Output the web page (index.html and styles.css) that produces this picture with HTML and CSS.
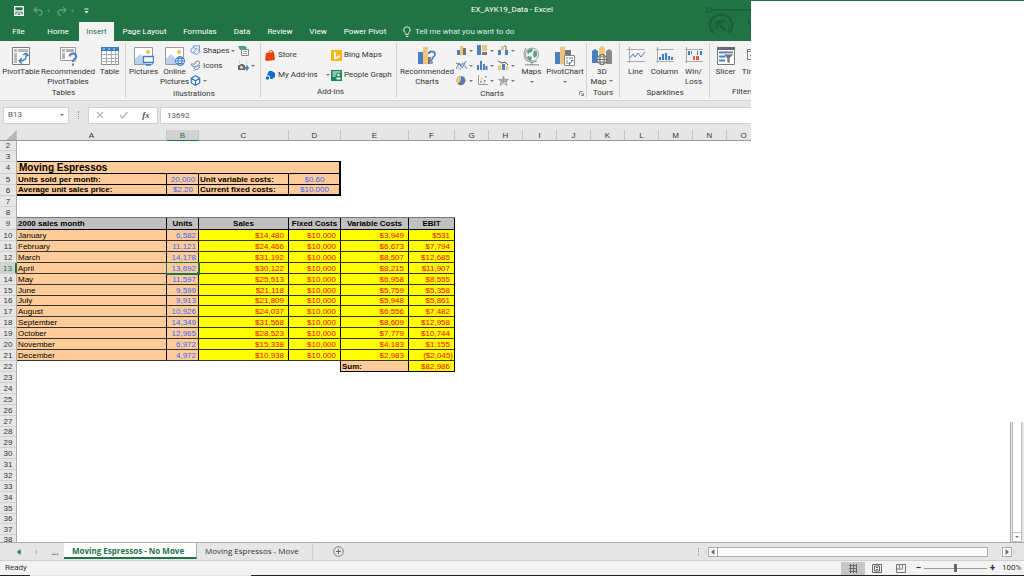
FILE: index.html
```html
<!DOCTYPE html>
<html lang="en">
<head>
<meta charset="utf-8">
<title>EX_AYK19_Data - Excel</title>
<link rel="stylesheet" href="styles.css">
</head>
<body>
<div class="app">
  <header class="title-bar">
    <div class="quick">
      <button class="flat" aria-label="Save"><svg width="10" height="10" viewBox="0 0 10 10"><path d="M.7.7h8.6v8.6H.7z" fill="none" stroke="#fff" stroke-width="1.3"/><path d="M.7 5h8.6" stroke="#fff" stroke-width="1.4"/><path d="M3 9V7h4v2" fill="none" stroke="#fff" stroke-width="1.2"/></svg></button>
      <button class="flat undo" aria-label="Undo"><svg width="18" height="10" viewBox="0 0 18 10"><path d="M4 1 1 4l3 3M1 4h5q3 0 3 3 0 2-3 2.500" fill="none" stroke="#5f9c79" stroke-width="1.300"/><path d="M14 4h3l-1.500 2z" fill="#5f9c79"/></svg></button>
      <button class="flat redo" aria-label="Redo"><svg width="18" height="10" viewBox="0 0 18 10"><path d="M6 1l3 3-3 3M9 4H4Q1 4 1 7q0 2 3 2.500" fill="none" stroke="#5f9c79" stroke-width="1.300"/><path d="M14 4h3l-1.500 2z" fill="#5f9c79"/></svg></button>
      <button class="flat" aria-label="Customize"><svg width="5" height="6" viewBox="0 0 5 6"><path d="M.5 1h4" stroke="#fff"/><path d="M.5 3h4l-2 2.500z" fill="#fff"/></svg></button>
    </div>
    <h1 class="doc-title">EX_AYK19_Data - Excel</h1>
    <svg class="title-art" width="60" height="33" viewBox="0 0 60 33"><g fill="none" stroke="#1a6038"><path d="M9 10h51" stroke-width="2"/><circle cx="6" cy="10" r="2.200" stroke-width="1.500"/><path d="M10 33a11 11 0 1 1 16 0" stroke-width="2.500"/><path d="M12 33a8 8 0 1 1 13-1" stroke-width="1"/><path d="M14 29v-7h7M14.500 22.500l8 8" stroke-width="2.500"/><circle cx="48" cy="22" r="2.500" stroke-width="1.500"/></g></svg>
  </header>

  <nav class="tabs">
    <button class="tab file">File</button>
    <button class="tab home">Home</button>
    <button class="tab active">Insert</button>
    <button class="tab layout">Page Layout</button>
    <button class="tab formulas">Formulas</button>
    <button class="tab data">Data</button>
    <button class="tab review">Review</button>
    <button class="tab view">View</button>
    <button class="tab pivot">Power Pivot</button>
    <button class="tab tell"><svg width="8" height="12" viewBox="0 0 8 12"><path d="M2.700 8.500V7.200Q.8 6 .8 4a3.200 3.200 0 0 1 6.400 0q0 2-1.900 3.200v1.300zM2.700 10.500h2.600" fill="none" stroke="#e6f0ea" stroke-width="1"/></svg>Tell me what you want to do</button>
  </nav>

  <section class="ribbon">
    <div class="group g-tables">
      <div class="tools">
        <button class="big w38"><svg width="20" height="20" viewBox="0 0 20 20"><path d="M1.500 1.500h17v17h-17z" fill="#fff" stroke="#7b7b7b"/><path d="M3 3h3v3H3zM7 3h10v3H7zM3 7h3v10H3z" fill="#b9b9b9"/><path d="M9 15c5 0 7-3 6-7M8 15l3-3M8 15l3 2.500M15 7l-3 2M15 7l2.500 3" fill="none" stroke="#3c7ec2" stroke-width="1.500"/></svg><span>PivotTable</span></button>
        <button class="big w56"><svg width="20" height="20" viewBox="0 0 20 20"><path d="M2.500 1.500h15v13h-15z" fill="#fff" stroke="#999"/><path d="M4 3h3v3H4zM8 3h8v3H8zM4 7h3v6H4z" fill="#b0b0b0"/><path d="M11.500 10.500q.5-3 3.500-3t3.200 3q0 1.500-1.700 2.500-1.500 1-1.500 3M15 17.500v2" fill="none" stroke="#4180c0" stroke-width="2"/></svg><span>Recommended<br>PivotTables</span></button>
        <button class="big w27"><svg width="20" height="20" viewBox="0 0 20 20"><path d="M1.500 1.500h17v17h-17z" fill="#fff" stroke="#8a8a8a"/><path d="M1 1h18v4H1z" fill="#3c7ec2"/><path d="M3 3h2M8 3h2M13 3h2" stroke="#dceafa"/><path d="M6.500 5v14M11.500 5v14M15.500 5v14M1 8.500h18M1 12.500h18M1 15.500h18" stroke="#ababab"/></svg><span>Table</span></button>
      </div>
      <div class="group-name">Tables</div>
    </div>

    <div class="group g-illus">
      <div class="tools">
        <button class="big w31"><svg width="20" height="20" viewBox="0 0 20 20"><path d="M.5 1.500h18v17H.5z" fill="#fff" stroke="#9a9a9a"/><circle cx="14" cy="6" r="2" fill="#eebc5c"/><path d="M1 18v-5l5-5 6 6v4z" fill="#bcd0e8"/><path d="M9.500 10.500h10v6h-10z" fill="#f4f9ff" stroke="#3c7ec2" stroke-width="1.300"/><path d="M12 19h5" stroke="#3c7ec2" stroke-width="1.500"/></svg><span>Pictures</span></button>
        <button class="big w31"><svg width="20" height="20" viewBox="0 0 20 20"><path d="M.5 1.500h18v17H.5z" fill="#fff" stroke="#9a9a9a"/><circle cx="14" cy="6" r="2" fill="#eebc5c"/><path d="M1 18v-5l5-5 6 6v4z" fill="#bcd0e8"/><g fill="none" stroke="#3c7ec2"><circle cx="15" cy="15" r="4.500" fill="#f4f9ff"/><ellipse cx="15" cy="15" rx="2" ry="4.500"/><path d="M10.500 15h9M11.500 12.500h7M11.500 17.500h7"/></g></svg><span>Online<br>Pictures</span></button>
        <div class="small-col shapes">
          <button class="small"><svg width="11" height="11" viewBox="0 0 11 11"><g fill="#eef5fd" stroke="#6b9bd0"><path d="M3.500.8h6v6h-6z"/><circle cx="3.500" cy="5.500" r="2.700"/><path d="M6.500 3.500l3.500 3-3.500 3.500L3.500 7z"/></g></svg>Shapes<i class="arrow"></i></button>
          <button class="small"><svg width="11" height="11" viewBox="0 0 11 11"><g fill="none" stroke="#808080"><path d="M1 4h4q0-3 2.500-3T9.500 3.500Q9 5 7 6M1 4q1 3 4 3"/></g><path d="M4 9q1-4 6-3-1 4-5 3.500L3.500 11" fill="#dce9f8" stroke="#5b90cc"/></svg>Icons</button>
          <button class="small" aria-label="3D Models"><svg width="11" height="11" viewBox="0 0 11 11"><path d="M5.500.8l4.200 2.400v4.800L5.500 10.300 1.300 8V3.200zM1.300 3.200l4.200 2.500 4.200-2.500M5.500 5.700v4.600" fill="#f4f9ff" stroke="#2f78c4" stroke-width="1.200"/></svg><i class="arrow"></i></button>
        </div>
        <div class="small-col">
          <button class="small" aria-label="SmartArt"><svg width="11" height="11" viewBox="0 0 11 11"><path d="M0 1h7l2 2-2 2H2z" fill="#4f9a79"/><path d="M3.500 4.500h7v6h-7z" fill="#fff" stroke="#888"/><path d="M5 6.500h4M5 8.500h4" stroke="#999"/></svg></button>
          <button class="small" aria-label="Screenshot"><svg width="11" height="11" viewBox="0 0 11 11"><path d="M1.500 3V.5M8.500 3V.5" stroke="#aaa" stroke-dasharray="1 1"/><path d="M0 5h2l1-1h2l1 1h1v5H0z" fill="#686868"/><circle cx="3.500" cy="7.300" r="1.500" fill="#ddd"/><path d="M9 5.500v5M6.500 8H11" stroke="#2f78c4" stroke-width="1.500"/></svg><i class="arrow"></i></button>
        </div>
      </div>
      <div class="group-name">Illustrations</div>
    </div>

    <div class="group g-addins">
      <div class="tools two-cols">
        <button class="small"><svg width="11" height="11" viewBox="0 0 11 11"><path d="M1 3l8-1 1 8-8 1-2-1z" fill="#e8430c"/><path d="M4 3q0-2.500 2-2.500t2 2" fill="none" stroke="#e8430c"/></svg>Store</button>
        <button class="small"><svg width="11" height="11" viewBox="0 0 11 11"><path d="M0 0h11v11H0z" fill="#f9b514"/><path d="M3 1.500l1.700.7v5L8 5.500 5.500 4.400l3.500 1v1.600L4.700 9.500 3 8.500z" fill="#fff"/></svg>Bing Maps</button>
        <button class="small"><svg width="11" height="11" viewBox="0 0 11 11"><path d="M4 1h3l3 2v4L7 9H5V6L2 5z" fill="#0c6fce"/><circle cx="2.500" cy="8" r="1.700" fill="#0c6fce"/></svg>My Add-ins<i class="arrow far"></i></button>
        <button class="small"><svg width="11" height="11" viewBox="0 0 11 11"><path d="M0 0h11v11H0z" fill="#1b8757"/><path d="M1.500 2h8M1.500 4h4M1.500 6h3" stroke="#fff"/><circle cx="7.500" cy="5" r="1.200" fill="#fff"/><path d="M5.500 9.500v-2h4v2z" fill="#fff"/></svg>People Graph</button>
      </div>
      <div class="group-name">Add-ins</div>
    </div>

    <div class="group g-charts">
      <div class="tools">
        <button class="big w58"><svg width="20" height="20" viewBox="0 0 20 20"><path d="M1 6h5v12H1z" fill="#4a80bd"/><path d="M6 1h5v17H6z" fill="#efc57b"/><path d="M11 11h4v7h-4z" fill="#777"/><path d="M11.500 8q.5-2.500 3.500-2.500T18 8.500q0 1.500-1.500 2.500-1.500 1-1.500 3M15 15.500v2" fill="none" stroke="#fff" stroke-width="3"/><path d="M11.500 8q.5-2.500 3.500-2.500T18 8.500q0 1.500-1.500 2.500-1.500 1-1.500 3M15 15.500v2" fill="none" stroke="#4a80bd" stroke-width="1.800"/></svg><span>Recommended<br>Charts</span></button>
        <div class="minis">
          <button class="small" aria-label="Column chart"><svg width="11" height="11" viewBox="0 0 11 11"><path d="M1 5h3v5H1z" fill="#4a80bd"/><path d="M4 1h3v9H4z" fill="#efc57b"/><path d="M7 3h3v7H7z" fill="#777"/></svg><i class="arrow"></i></button>
          <button class="small" aria-label="Hierarchy chart"><svg width="11" height="11" viewBox="0 0 11 11"><path d="M0 0h4v10H0z" fill="#4a80bd"/><path d="M5 0h5v6H5z" fill="#efc57b"/><path d="M5 7h5v3H5z" fill="#777"/></svg><i class="arrow"></i></button>
          <button class="small" aria-label="Waterfall chart"><svg width="11" height="11" viewBox="0 0 11 11"><path d="M0 5h3v5H0z" fill="#4a80bd"/><path d="M3 1h3v4H3z" fill="#efc57b"/><path d="M7 5h3v5H7z" fill="#4a80bd"/><path d="M6 1h2v4" fill="none" stroke="#777"/></svg><i class="arrow"></i></button>
          <button class="small" aria-label="Line chart"><svg width="11" height="11" viewBox="0 0 11 11"><path d="M0 9l3-6 3 5 4-7" fill="none" stroke="#4a80bd"/><path d="M0 3l4 2 3-2 4 6" fill="none" stroke="#777"/><path d="M1 6l3 4 3-7 3 5" fill="none" stroke="#9ab8d8"/></svg><i class="arrow"></i></button>
          <button class="small" aria-label="Statistic chart"><svg width="11" height="11" viewBox="0 0 11 11"><path d="M1 10V5M4 10V1M7 10V4M9.500 10V6" stroke="#4a80bd" stroke-width="2"/></svg><i class="arrow"></i></button>
          <button class="small" aria-label="Combo chart"><svg width="11" height="11" viewBox="0 0 11 11"><path d="M0 5h3v5H0z" fill="#efc57b"/><path d="M4 4h3v6H4z" fill="#4a80bd"/><path d="M8 6h2v4H8z" fill="#efc57b"/><path d="M0 1l4 2 3-1 3 3" fill="none" stroke="#555"/></svg><i class="arrow"></i></button>
          <button class="small" aria-label="Pie chart"><svg width="11" height="11" viewBox="0 0 11 11"><circle cx="5" cy="5.500" r="4.500" fill="#4a80bd"/><path d="M5 5.500V1a4.500 4.500 0 0 0-3 8z" fill="#efc57b"/><path d="M5 5.500L2 9a4.500 4.500 0 0 0 5 .6z" fill="#777"/></svg><i class="arrow"></i></button>
          <button class="small" aria-label="Scatter chart"><svg width="11" height="11" viewBox="0 0 11 11"><path d="M1.500 0v9.500H11" fill="none" stroke="#999"/><path d="M3 6h1.500v1.500H3zM7 5h1.500v1.500H7zM8 1h1.500v1.500H8z" fill="#4a80bd"/><path d="M4 3h1.500v1.500H4zM6 7h1.500v1.500H6z" fill="#efb55b"/></svg><i class="arrow"></i></button>
          <button class="small" aria-label="Radar chart"><svg width="11" height="11" viewBox="0 0 11 11"><path d="M5.500 1l1 3.500 4 0-3 2 1.500 4-3.500-2.500L2 10.500l1.500-4-3-2h4zM5.500 3v5M2 5l7 2M9 5L2 8" fill="none" stroke="#8a8a8a" stroke-width=".8"/></svg><i class="arrow"></i></button>
        </div>
        <button class="big w27"><svg width="20" height="20" viewBox="0 0 20 20"><circle cx="10" cy="8.500" r="6.500" fill="#f7f7f7" stroke="#999"/><path d="M5 5q3-3 6-2l-1 3-3 1-1 2zM12 4l3 2v4l-3 2-1-3zM6 10l4 1-1 4q-3-1-4-3z" fill="#58a385"/><path d="M4 2Q0 9 4 14q5 4 11 1M10 16v2.500M3 18.800h14" fill="none" stroke="#8a8a8a"/></svg><span>Maps</span><i class="arrow"></i></button>
        <button class="big w40"><svg width="20" height="20" viewBox="0 0 20 20"><path d="M0 6h5v12H0z" fill="#4a80bd"/><path d="M5 1h5v17H5z" fill="#efc57b"/><path d="M10 4h6v6h-6z" fill="#777"/><path d="M9.500 9.500h10v10h-10z" fill="#fff" stroke="#8a8a8a"/><path d="M11 11h2v2h-2zM14 11h4v2h-4zM11 14h2v4h-2z" fill="#bbb"/><path d="M14 17.500q3 0 3-3M15 16l-1.500 1.500L15 19M16 15l1-1 1.500 1" fill="none" stroke="#3c7ec2"/></svg><span>PivotChart</span><i class="arrow"></i></button>
      </div>
      <div class="group-name">Charts<button class="flat launcher" aria-label="Chart options"><svg width="5" height="5" viewBox="0 0 5 5"><path d="M.5 4V.5H4M2 2l2.500 2.500M4.500 2v2.500H2" fill="none" stroke="#777" stroke-width=".8"/></svg></button></div>
    </div>

    <div class="group g-tours">
      <div class="tools">
        <button class="big w30"><svg width="20" height="20" viewBox="0 0 20 20"><path d="M0 5l3-2 3 2v12H0z" fill="#4a80bd"/><path d="M7 2l3-2 3 2v10H7z" fill="#efc57b"/><path d="M14 5l3-2 3 2v13h-6z" fill="#8a8a8a"/><g fill="none" stroke="#666"><circle cx="10" cy="13.500" r="5" fill="#fff"/><ellipse cx="10" cy="13.500" rx="2.200" ry="5"/><path d="M5 13.500h10M6 11h8M6 16h8"/></g></svg><span>3D<br>Map<i class="arrow"></i></span></button>
      </div>
      <div class="group-name">Tours</div>
    </div>

    <div class="group g-spark">
      <div class="tools">
        <button class="big w29"><svg width="20" height="20" viewBox="0 0 20 20"><path d="M1 3.500h18M3.500 1v16M1 15.500h18" stroke="#aaa"/><path d="M4 12l3-4 2 3 3-4 3 4 4-5" fill="none" stroke="#4a80bd"/></svg><span>Line</span></button>
        <button class="big w29"><svg width="20" height="20" viewBox="0 0 20 20"><path d="M1 3.500h18M2.500 1v16M1 15.500h18" stroke="#aaa"/><path d="M4 11h2v3H4zM7 8h2v6H7zM10 7h2v7h-2zM13 10h2v4h-2zM16 11h2v3h-2z" fill="#3c7ec2"/></svg><span>Column</span></button>
        <button class="big w29"><svg width="20" height="20" viewBox="0 0 20 20"><path d="M1 3.500h18M2.500 1v16M1 15.500h18" stroke="#aaa"/><path d="M4 5h2v4H4zM7 5h1v3H7zM13 5h1v4h-1zM16 5h2v4h-2z" fill="#3c7ec2"/><path d="M9 10h2v4H9zM12 10h3v4h-3z" fill="#e2643e"/></svg><span>Win/<br>Loss</span></button>
      </div>
      <div class="group-name">Sparklines</div>
    </div>

    <div class="group g-filters">
      <div class="tools">
        <button class="big w29"><svg width="20" height="20" viewBox="0 0 20 20"><path d="M1.500 1.500h17v17h-17z" fill="#fff" stroke="#777"/><path d="M1 1h18v3H1z" fill="#6a6a6a"/><path d="M3 6.500h14M3 10.500h7M3 14.500h6" stroke="#4a80bd" stroke-width="2"/><path d="M7 8h11l-4 4v6l-3-2v-4z" fill="#777" stroke="#fff" stroke-width=".7"/></svg><span>Slicer</span></button>
        <button class="big w34"><svg width="20" height="20" viewBox="0 0 20 20"><path d="M.5 3.500h18v10H.5z" fill="#fff" stroke="#777"/><path d="M1 5.500h17" stroke="#888"/><path d="M3 9.500h13" stroke="#4a80bd" stroke-width="2"/></svg><span>Timeline</span></button>
      </div>
      <div class="group-name">Filters</div>
    </div>
  </section>

  <section class="formula-bar">
    <div class="name-box"><input type="text" value="B13" aria-label="Name box"><button class="flat" aria-label="Names"><i class="arrow"></i></button></div>
    <span class="dots"></span>
    <div class="fx">
      <button class="flat" aria-label="Cancel"><svg width="8" height="8" viewBox="0 0 8 8"><path d="M1 1l6 6M7 1L1 7" stroke="#b5b5b5" stroke-width="1.200"/></svg></button>
      <button class="flat" aria-label="Enter"><svg width="9" height="8" viewBox="0 0 9 8"><path d="M1 4l2.500 3L8.500 1" fill="none" stroke="#b5b5b5" stroke-width="1.400"/></svg></button>
      <button class="flat fn" aria-label="Insert function">fx</button>
    </div>
    <input class="formula" type="text" value="13692" aria-label="Formula">
  </section>

  <main class="sheet">
    <div class="cells">
      <table>
        <colgroup><col class="c-n"><col class="c-a"><col class="c-b"><col class="c-c"><col class="c-d"><col class="c-e"><col class="c-f"><col class="c-g"><col class="c-g"><col class="c-g"><col class="c-g"><col class="c-g"><col class="c-g"><col class="c-g"><col class="c-g"><col class="c-g"><col></colgroup>
        <thead><tr><th class="corner"></th><th>A</th><th class="sel">B</th><th>C</th><th>D</th><th>E</th><th>F</th><th>G</th><th>H</th><th>I</th><th>J</th><th>K</th><th>L</th><th>M</th><th>N</th><th>O</th><th></th></tr></thead>
        <tbody>
          <tr class="short"><th>2</th></tr>
          <tr class="above"><th>3</th><td colspan="4"></td></tr>
          <tr class="tall box name"><th>4</th><td colspan="4">Moving Espressos</td></tr>
          <tr class="box"><th>5</th><td>Units sold per month:</td><td class="in">20,000</td><td>Unit variable costs:</td><td class="in">$0.60</td></tr>
          <tr class="box last"><th>6</th><td>Average unit sales price:</td><td class="in">$2.20</td><td>Current fixed costs:</td><td class="in">$10,000</td></tr>
          <tr><th>7</th></tr>
          <tr class="above thin"><th>8</th><td colspan="6"></td></tr>
          <tr class="tall head"><th>9</th><td class="left">2000 sales month</td><td>Units</td><td>Sales</td><td>Fixed Costs</td><td>Variable Costs</td><td>EBIT</td></tr>
          <tr class="row"><th>10</th><td>January</td><td>6,582</td><td>$14,480</td><td>$10,000</td><td>$3,949</td><td>$531</td></tr>
          <tr class="row"><th>11</th><td>February</td><td>11,121</td><td>$24,466</td><td>$10,000</td><td>$6,673</td><td>$7,794</td></tr>
          <tr class="row"><th>12</th><td>March</td><td>14,178</td><td>$31,192</td><td>$10,000</td><td>$8,507</td><td>$12,685</td></tr>
          <tr class="row"><th class="sel">13</th><td>April</td><td class="picked">13,692</td><td>$30,122</td><td>$10,000</td><td>$8,215</td><td>$11,907</td></tr>
          <tr class="row"><th>14</th><td>May</td><td>11,597</td><td>$25,513</td><td>$10,000</td><td>$6,958</td><td>$8,555</td></tr>
          <tr class="row"><th>15</th><td>June</td><td>9,599</td><td>$21,118</td><td>$10,000</td><td>$5,759</td><td>$5,358</td></tr>
          <tr class="row short"><th>16</th><td>July</td><td>9,913</td><td>$21,809</td><td>$10,000</td><td>$5,948</td><td>$5,861</td></tr>
          <tr class="row"><th>17</th><td>August</td><td>10,926</td><td>$24,037</td><td>$10,000</td><td>$6,556</td><td>$7,482</td></tr>
          <tr class="row"><th>18</th><td>September</td><td>14,349</td><td>$31,568</td><td>$10,000</td><td>$8,609</td><td>$12,958</td></tr>
          <tr class="row"><th>19</th><td>October</td><td>12,965</td><td>$28,523</td><td>$10,000</td><td>$7,779</td><td>$10,744</td></tr>
          <tr class="row"><th>20</th><td>November</td><td>6,972</td><td>$15,338</td><td>$10,000</td><td>$4,183</td><td>$1,155</td></tr>
          <tr class="row"><th>21</th><td>December</td><td>4,972</td><td>$10,938</td><td>$10,000</td><td>$2,983</td><td class="neg">($2,045)</td></tr>
          <tr><th>22</th><td colspan="3"></td><td class="edge"></td><td class="sum-label">Sum:</td><td class="sum">$82,986</td></tr>
          <tr><th>23</th></tr>
          <tr><th>24</th></tr>
          <tr><th>25</th></tr>
          <tr><th>26</th></tr>
          <tr><th>27</th></tr>
          <tr class="short"><th>28</th></tr>
          <tr><th>29</th></tr>
          <tr><th>30</th></tr>
          <tr><th>31</th></tr>
          <tr><th>32</th></tr>
          <tr><th>33</th></tr>
          <tr><th>34</th></tr>
          <tr><th>35</th></tr>
          <tr class="short"><th>36</th></tr>
          <tr><th>37</th></tr>
          <tr class="short"><th>38</th></tr>
        </tbody>
      </table>
    </div>
    <div class="v-scroll"><div class="v-track"></div><button class="flat step" aria-label="Scroll down"><i class="arrow"></i></button></div>
  </main>

  <div class="sheet-bar">
    <button class="flat nav" aria-label="Previous sheet"><svg width="4" height="6" viewBox="0 0 4 6"><path d="M3.500 0v6L0 3z" fill="#217346"/></svg></button>
    <button class="flat nav" aria-label="Next sheet"><svg width="4" height="6" viewBox="0 0 4 6"><path d="M.5 0v6L3 3z" fill="#bbb"/></svg></button>
    <button class="flat nav more">...</button>
    <button class="sheet-tab current">Moving Espressos - No Move</button>
    <button class="sheet-tab">Moving Espressos - Move</button>
    <button class="flat add" aria-label="New sheet"><svg width="11" height="11" viewBox="0 0 11 11"><circle cx="5.500" cy="5.500" r="4.800" fill="none" stroke="#777"/><path d="M5.500 3v5M3 5.500h5" stroke="#666"/></svg></button>
    <span class="dots"></span>
    <div class="h-scroll">
      <button class="flat step" aria-label="Scroll left"><svg width="4" height="6" viewBox="0 0 4 6"><path d="M3.500 0v6L0 3z" fill="#666"/></svg></button>
      <div class="thumb"></div>
      <button class="flat step" aria-label="Scroll right"><svg width="4" height="6" viewBox="0 0 4 6"><path d="M.5 0v6L4 3z" fill="#666"/></svg></button>
    </div>
  </div>

  <footer class="status">
    <span class="ready">Ready</span>
    <button class="flat mode on" aria-label="Normal view"><svg width="10" height="9" viewBox="0 0 10 9"><path d="M1 1.500h8M1 4.500h8M1 7.500h8M2.500 0v9M5.500 0v9M8.500 0v9" stroke="#666"/></svg></button>
    <button class="flat mode" aria-label="Page layout view"><svg width="10" height="9" viewBox="0 0 10 9"><path d="M.5.5h9v8h-9zM2.500 2h5v5h-5zM4 3.500h2M4 5.500h2" fill="none" stroke="#666"/></svg></button>
    <button class="flat mode" aria-label="Page break view"><svg width="10" height="9" viewBox="0 0 10 9"><path d="M.5.500h9v8h-9zM3.500.5v4M6.500.5v4M.5 5h6" fill="none" stroke="#777"/></svg></button>
    <button class="flat zoom-step">−</button>
    <input class="zoom" type="range" min="0" max="100" value="50" aria-label="Zoom">
    <button class="flat zoom-step">+</button>
    <span class="percent">100%</span>
  </footer>
  <div class="edge-line"></div>
  <div class="blank-panel"></div>
</div>
</body>
</html>
```
FILE: styles.css
```css
* { box-sizing: border-box; }
body { margin: 0; font: 8px/10px Roboto, "Open Sans", sans-serif; color: #333; }
button, input { font: inherit; color: inherit; margin: 0; padding: 0; border: 0; background: none; border-radius: 0; }
svg { display: block; flex: none; }
input:focus { outline: none; }

.app { display: flex; flex-direction: column; height: 100vh; overflow: hidden; position: relative; background: #e6e6e6; }
.flat { display: flex; align-items: center; justify-content: center; }
.arrow { display: inline-block; flex: none; border: 2px solid transparent; border-top-color: #777; border-bottom: 0; }

/* Title bar */
.title-bar { flex: none; display: flex; align-items: center; justify-content: center; height: 22px; padding-bottom: 2px; background: #217346; color: #fff; position: relative; }
.quick { position: absolute; left: 14px; top: 6px; display: flex; gap: 6px; align-items: center; }
.undo { margin-left: 3px; }
.redo { margin-right: 3px; }
.doc-title { margin: 0; font-size: 8px; font-weight: 400; line-height: 12px; }
.title-art { position: absolute; left: 703px; top: 0; }

/* Ribbon tabs */
.tabs { flex: none; display: flex; height: 19px; background: #217346; color: #fff; }
.tab { flex: none; text-align: center; white-space: nowrap; }
.file { width: 37px; }
.home { width: 42px; }
.active { width: 35px; background: #f3f3f3; color: #217346; }
.layout { width: 61px; }
.formulas { width: 50px; }
.data { width: 34px; }
.review { width: 42px; }
.view { width: 34px; }
.pivot { width: 60px; }
.tell { display: flex; align-items: center; gap: 4px; padding-left: 8px; color: #dcebe2; }

/* Ribbon */
.ribbon { flex: none; display: flex; height: 60px; padding-top: 2px; overflow: hidden; background: #f3f3f3; border-bottom: 1px solid #d2d2d2; }
.group { flex: none; display: flex; flex-direction: column; position: relative; border-right: 1px solid #d2d2d2; margin-bottom: 2px; }
.group-name { text-align: center; line-height: 12px; }
.tools { display: flex; height: 45px; }
.g-tables { width: 126px; padding-left: 2px; }
.g-illus { width: 135px; padding-left: 2px; }
.g-addins { width: 136px; padding-left: 4px; }
.g-charts { width: 190px; padding-left: 1px; }
.g-tours { width: 33px; }
.g-spark { width: 90px; padding-left: 1px; }
.g-filters { width: 66px; padding-left: 1px; }
.big { display: flex; flex: none; flex-direction: column; align-items: center; padding-top: 3px; white-space: nowrap; }
.big span { margin-top: 1px; }
.big > .arrow { margin-top: 4px; }
.big span .arrow { margin-left: 3px; vertical-align: 2px; }
.w27 { width: 27px; }
.w29 { width: 29px; }
.w30 { width: 30px; }
.w31 { width: 31px; }
.w34 { width: 34px; }
.w38 { width: 38px; }
.w40 { width: 40px; }
.w56 { width: 56px; }
.w58 { width: 58px; }
.small { display: flex; align-items: center; gap: 2px; height: 15px; white-space: nowrap; }
.small-col { display: flex; flex-direction: column; }
.shapes { width: 48px; }
.two-cols { display: grid; grid-template-columns: 66px 1fr; grid-auto-rows: 20px; padding-top: 2px; }
.two-cols .small { height: 20px; }
.far { margin-left: 6px; }
.minis { display: grid; grid-template-columns: repeat(3, 21px); grid-auto-rows: 15px; width: 62px; }
.launcher { position: absolute; right: 2px; bottom: 2px; }

/* Formula bar */
.formula-bar { flex: none; display: flex; align-items: center; height: 29px; padding: 0 0 1px 3px; color: #555; }
.name-box, .fx { display: flex; align-items: center; height: 17px; background: #fff; border: 1px solid #d0d0d0; }
.name-box { width: 66px; }
.name-box input { flex: 1; min-width: 0; padding-left: 4px; }
.name-box button { width: 12px; }
.dots { width: 1px; height: 8px; border-left: 1px dotted #999; margin: 0 9px; }
.fx { width: 70px; justify-content: space-around; }
.fn { font: italic bold 9px/10px "Liberation Serif", serif; }
.formula { flex: 1; height: 17px; margin-left: 2px; padding-left: 6px; background: #fff; border: 1px solid #d0d0d0; }

/* Worksheet */
.sheet { flex: 1; min-height: 0; display: flex; border-bottom: 1px solid #ababab; }
.cells { flex: 1; min-width: 0; overflow: hidden; background: #fff; border-right: 1px solid #ababab; }
table { width: 100%; table-layout: fixed; border-collapse: separate; border-spacing: 0; font: 8px/9px "Liberation Sans", Arial, sans-serif; color: #000; }
.c-n { width: 17px; }
.c-a { width: 150px; }
.c-b { width: 32px; }
.c-c { width: 90px; }
.c-d { width: 52px; }
.c-e { width: 68px; }
.c-f { width: 46px; }
.c-g { width: 34px; }
th, td { padding: 0; white-space: nowrap; overflow: hidden; }
th { font-weight: 400; background: #e6e6e6; color: #333; text-align: center; }
tbody tr { height: 11px; }
tbody tr.short { height: 10px; line-height: 8px; }
tbody tr.tall { height: 12px; }
tbody th { border-right: 1px solid #ababab; border-bottom: 1px solid #cfcfcf; }
thead tr { height: 11px; }
thead th { border-right: 1px solid #c4c4c4; border-bottom: 1px solid #9a9a9a; }
.corner { background: linear-gradient(135deg, #e6e6e6 65%, #b7b7b7 65%); }
thead .sel { background: #d2d2d2; color: #217346; border-bottom-color: #217346; }
tbody .sel { background: #d2d2d2; color: #217346; border-right: 2px solid #217346; }
.above td { border-bottom: 1px solid #000; }
.above.thin td { border-bottom-color: #777; }

.box td { background: #ffcc99; border-right: 1px solid #000; border-bottom: 1px solid #000; font-weight: 700; padding-left: 1px; }
.box td:last-child { border-right: 2px solid #000; }
.box.last td { border-bottom: 2px solid #000; line-height: 8px; }
.name td { font-size: 10px; line-height: 11px; padding-left: 2px; }
.box .in { color: #3366ff; font-weight: 400; text-align: center; }
.head td { background: #c0c0c0; border-right: 1px solid #000; border-bottom: 1px solid #000; font-weight: 700; text-align: center; }
.head .left { text-align: left; padding-left: 1px; }
.row td { background: #ffff00; color: #ff0000; border-right: 1px solid #000; border-bottom: 1px solid #333; text-align: right; padding-right: 4px; }
.row td:nth-child(2), .row td:nth-child(3) { background: #ffcc99; }
.row td:nth-child(2) { color: #000; text-align: left; padding-left: 1px; }
.row td:nth-child(3) { color: #3366ff; padding-right: 2px; }
.row .neg { padding-right: 1px; }
.row .picked { position: relative; overflow: visible; outline: 1px solid #217346; border-color: #217346; }
.picked::after { content: ""; position: absolute; right: -2px; bottom: -2px; width: 3px; height: 3px; background: #217346; }
.edge { border-right: 1px solid #000; }
.sum-label { background: #ffcc99; font-weight: 700; border-right: 1px solid #000; border-bottom: 1px solid #000; padding-left: 1px; }
.sum { background: #ffff00; color: #ff0000; text-align: right; padding-right: 4px; border-right: 1px solid #000; border-bottom: 1px solid #000; }

.v-scroll { flex: none; display: flex; flex-direction: column; width: 13px; padding: 0 2px 0 1px; }
.v-track { flex: 1; background: #fff; border: 1px solid #bcbcbc; }
.v-scroll .step { height: 9px; background: #fff; border: 1px solid #bcbcbc; border-top: 0; }

/* Sheet tabs */
.sheet-bar { flex: none; display: flex; align-items: center; height: 18px; padding: 0 12px 0 10px; border-bottom: 1px solid #cfcfcf; font-family: "Open Sans", "Noto Sans", sans-serif; }
.nav { width: 18px; height: 16px; }
.more { color: #217346; font-weight: 700; }
.sheet-tab { align-self: flex-start; height: 16px; width: 116px; padding-left: 8px; text-align: left; white-space: nowrap; border-right: 1px solid #cfcfcf; line-height: 16px; }
.current { width: 133px; background: #fff; color: #217346; font-weight: 700; border-bottom: 2px solid #217346; border-right-color: #ababab; }
.add { margin: 0 auto 0 20px; }
.h-scroll { display: flex; width: 304px; flex: none; height: 10px; }
.h-scroll .step { width: 10px; background: #fff; border: 1px solid #ababab; }
.thumb { flex: 1; margin-right: 14px; background: #fff; border: 1px solid #ababab; border-left: 0; }

/* Status bar */
.status { flex: none; display: flex; align-items: center; height: 14px; padding: 0 4px 0 5px; background: #f3f3f3; }
.ready { margin-right: auto; }
.mode { width: 24px; height: 13px; }
.on { background: #c6c6c6; }
.zoom-step { width: 11px; font-weight: 700; font-size: 10px; }
.zoom { appearance: none; width: 63px; height: 9px; background: linear-gradient(#999, #999) center / 100% 1px no-repeat; }
.zoom::-webkit-slider-thumb { appearance: none; width: 3px; height: 8px; background: #666; }
.percent { margin-left: 4px; width: 18px; text-align: right; white-space: nowrap; }
.edge-line { flex: none; height: 1px; background: linear-gradient(90deg, #222 30px, #e6e6e6 30px 251px, #222 251px); }

/* Empty panel lying over the right of the window */
.blank-panel { position: absolute; top: 1px; left: 751px; right: 0; height: 421px; background: #fff; }
```
